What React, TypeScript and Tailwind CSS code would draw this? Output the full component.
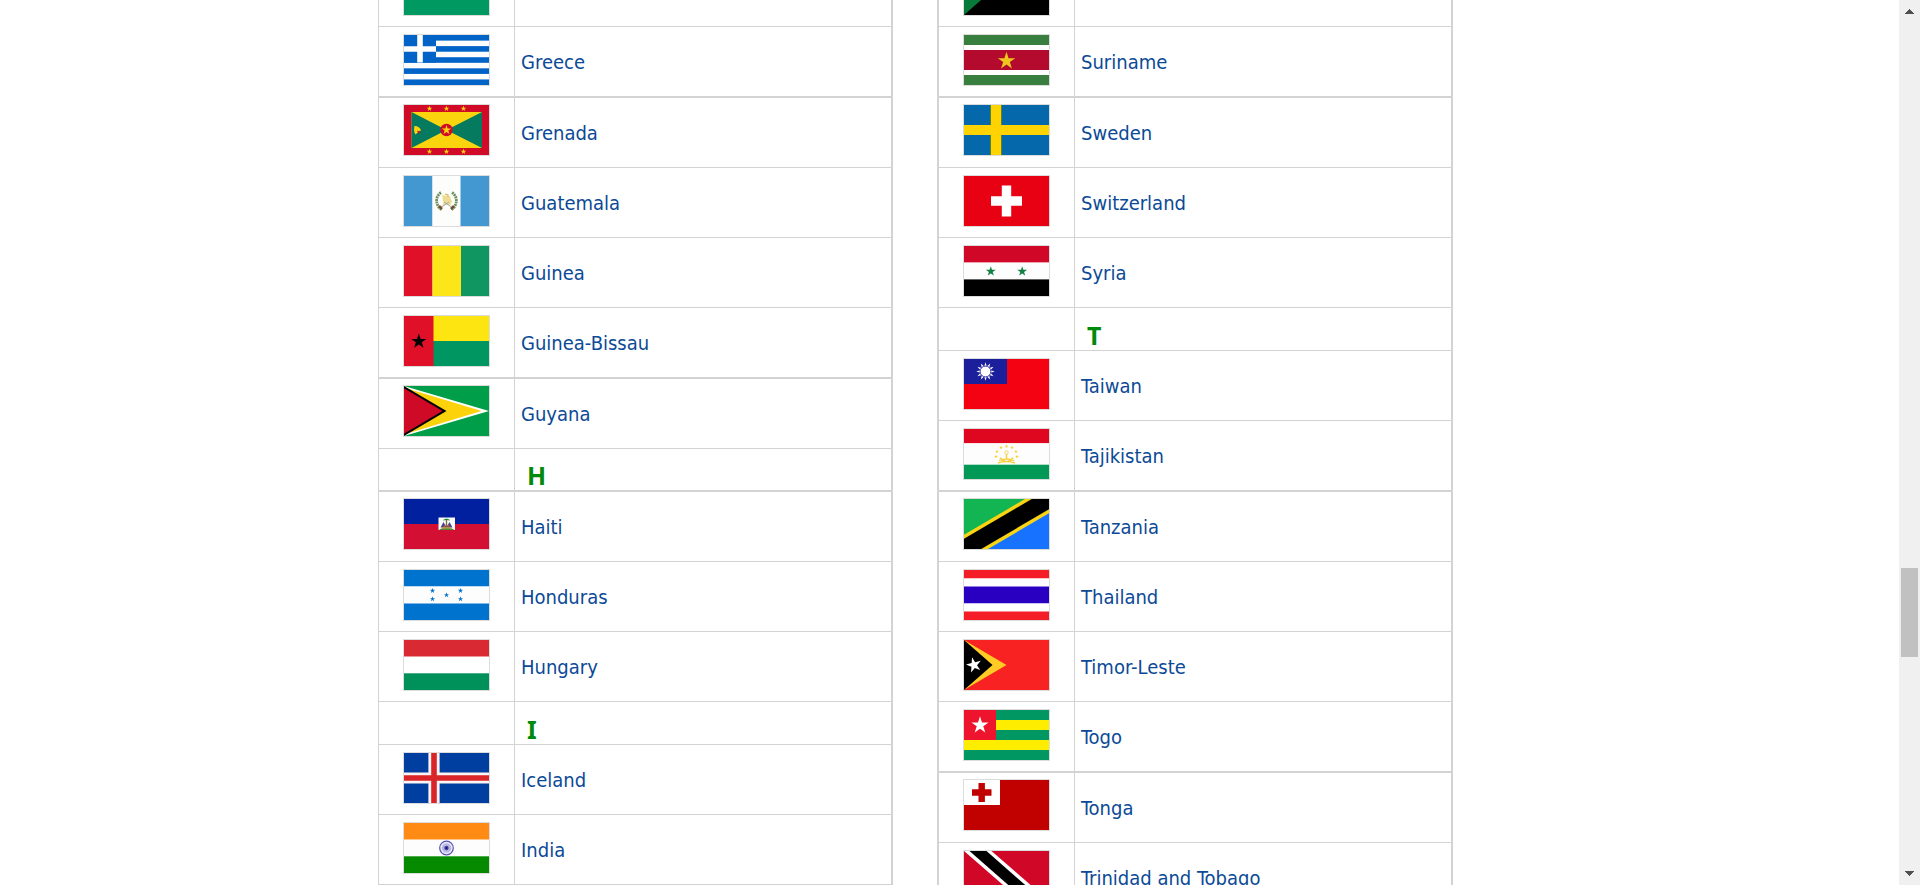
import type { ReactNode } from "react";

type Country = { kind: "country"; name: string; flag: ReactNode; thick?: boolean };
type Letter = { kind: "letter"; letter: string; compact?: boolean };
type Row = Country | Letter;

function starPoints(cx: number, cy: number, r: number, spikes = 5, inner = 0.382, turn = 0) {
  return Array.from({ length: spikes * 2 }, (_, i) => {
    const radius = i % 2 === 0 ? r : r * inner;
    const a = (Math.PI * i) / spikes - Math.PI / 2 + turn;
    return `${(cx + radius * Math.cos(a)).toFixed(2)},${(cy + radius * Math.sin(a)).toFixed(2)}`;
  }).join(" ");
}

function Star({ x, y, r, fill, turn = 0 }: { x: number; y: number; r: number; fill: string; turn?: number }) {
  return <polygon points={starPoints(x, y, r, 5, 0.382, turn)} fill={fill} />;
}

function Bands({ colors, sizes, vertical }: { colors: string[]; sizes: number[]; vertical?: boolean }) {
  let at = 0;
  return (
    <>
      {colors.map((c, i) => {
        const start = at;
        at += sizes[i];
        return vertical ? (
          <rect key={i} x={start} y={0} width={sizes[i]} height={50} fill={c} />
        ) : (
          <rect key={i} x={0} y={start} width={85} height={sizes[i]} fill={c} />
        );
      })}
    </>
  );
}

const greece = (
  <>
    <rect width="85" height="50" fill="#fdfdfd" />
    {[0, 2, 4, 6, 8].map((i) => (
      <rect key={i} y={i * 5.555} width="85" height="5.6" fill="#0063c8" />
    ))}
    <rect width="32" height="27.6" fill="#0063c8" />
    <path d="M16 0v27.6M0 14h32" stroke="#fdfdfd" strokeWidth="5.6" />
  </>
);

const grenada = (
  <>
    <rect width="85" height="50" fill="#d00a27" />
    <rect x="7.5" y="7" width="70.5" height="36" fill="#fad50e" />
    <path d="M7.5 7L42.5 25L7.5 43zM78 7L42.5 25L78 43z" fill="#067a5e" />
    <circle cx="42.5" cy="25" r="6.2" fill="#d00a27" />
    <Star x={42.5} y={25} r={5} fill="#fad50e" />
    {[25.5, 42.5, 59.5].map((x) => (
      <g key={x}>
        <Star x={x} y={3.6} r={3} fill="#fad50e" />
        <Star x={x} y={46.6} r={3} fill="#fad50e" />
      </g>
    ))}
    <path d="M10.500 21c3 0 6 2 6.500 4.500c-2 0-3 2-5.500 4c-1.500-2-1.800-5-1-8.500z" fill="#fad50e" />
    <path d="M13 25.500l3.500 1.500l-2 1.800z" fill="#d00a27" />
  </>
);

const guatemala = (
  <>
    <Bands vertical colors={["#4498d2", "#fdfdfb", "#4498d2"]} sizes={[28.5, 28, 28.5]} />
    <path
      d="M37 16.500c-6 4-6 13 1 17.500M48 16.500c6 4 6 13-1 17.500"
      fill="none"
      stroke="#6f9160"
      strokeWidth="2.8"
      strokeDasharray="2 .6"
    />
    <path d="M38 19l8 1.500l2 5l-2 4l-4-1l-4 2l1.500-3z" fill="#eddc92" />
    <path d="M36 32l9-6M49 32l-9-6" stroke="#a9aaa0" strokeWidth="1" />
    <path d="M35 30l3 3M50 30l-3 3" stroke="#73502f" strokeWidth="2.5" />
    <path d="M41 18l3 1v2" fill="none" stroke="#d4b95b" strokeWidth="1.2" />
  </>
);

const guineaBissau = (
  <>
    <rect width="85" height="25" fill="#fde511" />
    <rect y="25" width="85" height="25" fill="#009661" />
    <rect width="29.5" height="50" fill="#df1027" />
    <Star x={14.8} y={25.4} r={8} fill="#000" />
  </>
);

const guyana = (
  <>
    <rect width="85" height="50" fill="#009e49" />
    <path d="M0 0L85 25L0 50z" fill="#fff" />
    <path d="M0 1.500L77.500 25L0 48.500z" fill="#fcd20b" />
    <path d="M0 0L42.500 25L0 50z" fill="#000" />
    <path d="M0 2.300L38.500 25L0 47.700z" fill="#cf0a27" />
  </>
);

const haiti = (
  <>
    <Bands colors={["#00209f", "#d31033"]} sizes={[25, 25]} />
    <rect x="34.5" y="18.5" width="16.5" height="12.5" fill="#fbfbf7" />
    <path d="M35 31c3-3.500 12-3.500 15.500 0z" fill="#4b8b3a" />
    <path d="M42.500 20v8" stroke="#7a6a3c" strokeWidth="1.3" />
    <path d="M39 21.500c1-2.500 6-2.500 7 0l-3.500-.5z" fill="#1f8b35" />
    <path d="M36.500 28.500l3-5.500l3 5.500zM48.500 28.500l-3-5.500l-3 5.500z" fill="#3c4693" />
    <path d="M38.500 28.500l2.500-3.500l1 3.500zM46.500 28.500l-2.500-3.500l-1 3.500z" fill="#b24b44" />
    <path d="M38 29h9" stroke="#c4a240" strokeWidth="1.2" />
  </>
);

const honduras = (
  <>
    <Bands colors={["#0073cf", "#fdfdfd", "#0073cf"]} sizes={[16.5, 17, 16.5]} />
    {[[28.5, 20.7], [28.5, 29], [42.5, 25], [56.5, 20.7], [56.5, 29]].map(([x, y]) => (
      <Star key={`${x}-${y}`} x={x} y={y} r={2.8} fill="#0073cf" />
    ))}
  </>
);

const iceland = (
  <>
    <rect width="85" height="50" fill="#003f9f" />
    <path d="M30 0v50M0 25h85" stroke="#fbf4f4" strokeWidth="11.2" />
    <path d="M30 0v50M0 25h85" stroke="#d92529" strokeWidth="5.6" />
  </>
);

const india = (
  <>
    <Bands colors={["#ff8a14", "#fdfdfd", "#068a00"]} sizes={[16.7, 16.6, 16.7]} />
    <circle cx="42.5" cy="25" r="6.8" fill="#ececf8" stroke="#5552b4" strokeWidth="1.2" />
    <circle cx="42.5" cy="25" r="3.2" fill="none" stroke="#a3a1d8" strokeWidth="3" strokeDasharray=".7 .3" />
    <circle cx="42.5" cy="25" r="2.2" fill="#4a46a4" />
    <circle cx="42.5" cy="25" r="1.2" fill="#211c8a" />
  </>
);

const suriname = (
  <>
    <Bands colors={["#377e3f", "#fff", "#b40a2d", "#fff", "#377e3f"]} sizes={[10, 5, 20, 5, 10]} />
    <Star x={42.5} y={26} r={9.2} fill="#ecc81d" />
  </>
);

const sweden = (
  <>
    <rect width="85" height="50" fill="#0468aa" />
    <path d="M32 0v50M0 25h85" stroke="#fed300" strokeWidth="10" />
    <path d="M26.500 0v20M37.500 0v20M26.500 30v20M37.500 30v20" stroke="#55842f" strokeWidth="1" />
  </>
);

const switzerland = (
  <>
    <rect width="85" height="50" fill="#e80013" />
    <path d="M42.500 9.500v31M27 25h31" stroke="#fff" strokeWidth="9.4" />
  </>
);

const syria = (
  <>
    <Bands colors={["#d00726", "#fdfdfd", "#000"]} sizes={[16.6, 16.8, 16.6]} />
    <Star x={26.8} y={25.4} r={5.2} fill="#138044" />
    <Star x={58.2} y={25.4} r={5.2} fill="#138044" />
  </>
);

const taiwan = (
  <>
    <rect width="85" height="50" fill="#f40212" />
    <rect width="43" height="25" fill="#1b1f9b" />
    <polygon points={starPoints(21.5, 12.5, 9.3, 12, 0.55)} fill="#fff" />
    <circle cx="21.5" cy="12.5" r="5.4" fill="#fff" stroke="#1b1f9b" strokeWidth=".9" />
  </>
);

const tajikistan = (
  <>
    <Bands colors={["#df0620", "#fdfdfd", "#029855"]} sizes={[14.3, 21.4, 14.3]} />
    {[[32, 27.5], [33, 22.5], [37, 18.5], [42.5, 17.3], [48, 18.5], [52, 22.5], [53, 27.5]].map(([x, y]) => (
      <Star key={x} x={x} y={y} r={2} fill="#fbcc28" />
    ))}
    <circle cx="42.5" cy="23.5" r="1.7" fill="none" stroke="#f8d35a" strokeWidth="1" />
    <path
      d="M42.500 25v5M36 28.500l3 3.500l3.500-2.500l3.500 2.500l3-3.500M35 31.500q7.500-3 15 0M34 34q8.500-3 17 0"
      fill="none"
      stroke="#f8cf42"
      strokeWidth="1.4"
    />
  </>
);

const tanzania = (
  <>
    <rect width="85" height="50" fill="#12b551" />
    <path d="M85 0v50H0z" fill="#1672ff" />
    <path d="M-8.500 55L93.500 -5" stroke="#fad413" strokeWidth="24.4" />
    <path d="M-8.500 55L93.500 -5" stroke="#000" strokeWidth="17.5" />
  </>
);

const timorLeste = (
  <>
    <rect width="85" height="50" fill="#f92222" />
    <path d="M0 0L42.500 25L0 50z" fill="#ffcb25" />
    <path d="M0 0L28.500 25L0 50z" fill="#000" />
    <Star x={10} y={25} r={8} fill="#fff" turn={-0.25} />
  </>
);

const togo = (
  <>
    <Bands colors={["#009763", "#ffed00", "#009763", "#ffed00", "#009763"]} sizes={[10, 10, 10, 10, 10]} />
    <rect width="32" height="30" fill="#ef142d" />
    <Star x={16} y={15.3} r={9} fill="#fff" />
  </>
);

const tonga = (
  <>
    <rect width="85" height="50" fill="#c10000" />
    <rect width="36" height="25" fill="#fff" />
    <path d="M17.700 3v19M8 12.500h19.500" stroke="#c10000" strokeWidth="6.4" />
  </>
);

const trinidad = (
  <>
    <rect width="85" height="50" fill="#d00726" />
    <path d="M0 0h27.500L85 50H57.500z" fill="#fff" />
    <path d="M5.500 0h17L79.500 50h-17z" fill="#000" />
  </>
);

const ghana = <Bands colors={["#cf0921", "#fcd20f", "#009961"]} sizes={[16.7, 16.6, 16.7]} />;

const sudan = (
  <>
    <Bands colors={["#d21034", "#fff", "#000"]} sizes={[16.7, 16.6, 16.7]} />
    <path d="M0 0L28.500 25L0 50z" fill="#077a3a" />
  </>
);

const leftRows: Row[] = [
  { kind: "country", name: "Greece", flag: greece },
  { kind: "country", name: "Grenada", flag: grenada, thick: true },
  { kind: "country", name: "Guatemala", flag: guatemala },
  {
    kind: "country",
    name: "Guinea",
    flag: <Bands vertical colors={["#df1027", "#fce61a", "#109661"]} sizes={[28.5, 28.5, 28]} />,
  },
  { kind: "country", name: "Guinea-Bissau", flag: guineaBissau },
  { kind: "country", name: "Guyana", flag: guyana, thick: true },
  { kind: "letter", letter: "H", compact: true },
  { kind: "country", name: "Haiti", flag: haiti, thick: true },
  { kind: "country", name: "Honduras", flag: honduras },
  {
    kind: "country",
    name: "Hungary",
    flag: <Bands colors={["#d92a33", "#fff", "#00915a"]} sizes={[16.7, 16.6, 16.7]} />,
  },
  { kind: "letter", letter: "I" },
  { kind: "country", name: "Iceland", flag: iceland },
  { kind: "country", name: "India", flag: india },
];

const rightRows: Row[] = [
  { kind: "country", name: "Suriname", flag: suriname },
  { kind: "country", name: "Sweden", flag: sweden, thick: true },
  { kind: "country", name: "Switzerland", flag: switzerland },
  { kind: "country", name: "Syria", flag: syria },
  { kind: "letter", letter: "T" },
  { kind: "country", name: "Taiwan", flag: taiwan },
  { kind: "country", name: "Tajikistan", flag: tajikistan },
  { kind: "country", name: "Tanzania", flag: tanzania, thick: true },
  {
    kind: "country",
    name: "Thailand",
    flag: <Bands colors={["#f41c27", "#fff", "#2900c2", "#fff", "#f41c27"]} sizes={[8.5, 8, 17, 8, 8.5]} />,
  },
  { kind: "country", name: "Timor-Leste", flag: timorLeste },
  { kind: "country", name: "Togo", flag: togo },
  { kind: "country", name: "Tonga", flag: tonga, thick: true },
  { kind: "country", name: "Trinidad and Tobago", flag: trinidad },
];

function Flag({ children }: { children: ReactNode }) {
  return (
    <div className="mx-auto w-[87px] shrink-0 border border-[#dcdcdc]">
      <svg viewBox="0 0 85 50" width="85" height="50" className="block" aria-hidden="true">
        {children}
      </svg>
    </div>
  );
}

function CountryTable({ rows, cutFlag, wideEdge }: { rows: Row[]; cutFlag: ReactNode; wideEdge?: boolean }) {
  return (
    <table
      className={`flex-1 table-fixed border-separate border-spacing-0 border-r-2 border-b border-[#d3d3d3] ${
        wideEdge ? "border-l-2" : "border-l"
      }`}
    >
      <colgroup>
        <col className="w-[135px]" />
        <col />
      </colgroup>
      <tbody>
        <tr>
          <td className="h-[26px] p-0 align-top">
            <div className="flex h-4 items-end overflow-hidden">
              <Flag>{cutFlag}</Flag>
            </div>
          </td>
          <td className="border-l border-[#d3d3d3] p-0" />
        </tr>
        {rows.map((row) =>
          row.kind === "letter" ? (
            <tr key={row.letter}>
              <td className="border-t border-[#d3d3d3] p-0" />
              <td className="border-t border-l border-[#d3d3d3] p-0 pl-3 align-bottom">
                <h3
                  className={`flex items-end font-['Noto_Sans',sans-serif] text-[25px] leading-[30px] font-bold text-[#008a0c] ${
                    row.compact ? "h-[41px]" : "h-[42px]"
                  }`}
                >
                  {row.letter}
                </h3>
              </td>
            </tr>
          ) : (
            <tr key={row.name}>
              <td className={`border-[#d3d3d3] p-0 align-top ${row.thick ? "border-t-2 pt-1.5" : "border-t pt-[7px]"}`}>
                <Flag>{row.flag}</Flag>
              </td>
              <td className={`border-l border-[#d3d3d3] p-0 pl-1.5 ${row.thick ? "border-t-2" : "border-t"}`}>
                <div className="flex h-[69px] items-center">
                  <a href="#" className="text-xl text-[#0b4a96]">
                    {row.name}
                  </a>
                </div>
              </td>
            </tr>
          ),
        )}
      </tbody>
    </table>
  );
}

function Scrollbar() {
  return (
    <div className="flex w-[21px] shrink-0 flex-col items-center bg-[#f0f0f0] py-[9px]" aria-hidden="true">
      <svg width="9" height="5" viewBox="0 0 9 5" shapeRendering="crispEdges">
        <path d="M4 0h1v1h1v1h1v1h1v1h1v1H0V4h1V3h1V2h1V1h1z" fill="#505050" />
      </svg>
      <div className="grow-[554]" />
      <div className="h-[89px] w-[17px] bg-[#c1c1c1]" />
      <div className="grow-[214]" />
      <svg width="9" height="5" viewBox="0 0 9 5" shapeRendering="crispEdges">
        <path d="M0 0h9v1H8v1H7v1H6v1H5v1H4V4H3V3H2V2H1V1H0z" fill="#505050" />
      </svg>
    </div>
  );
}

export default function App() {
  return (
    <div className="flex h-screen overflow-hidden bg-white font-[Tahoma,'DejaVu_Sans_Condensed',sans-serif]">
      <main className="min-w-0 grow">
        <div className="mx-auto flex max-w-[1143px] items-start gap-11 pr-[68px]">
          <CountryTable rows={leftRows} cutFlag={ghana} />
          <CountryTable rows={rightRows} cutFlag={sudan} wideEdge />
        </div>
      </main>
      <Scrollbar />
    </div>
  );
}
